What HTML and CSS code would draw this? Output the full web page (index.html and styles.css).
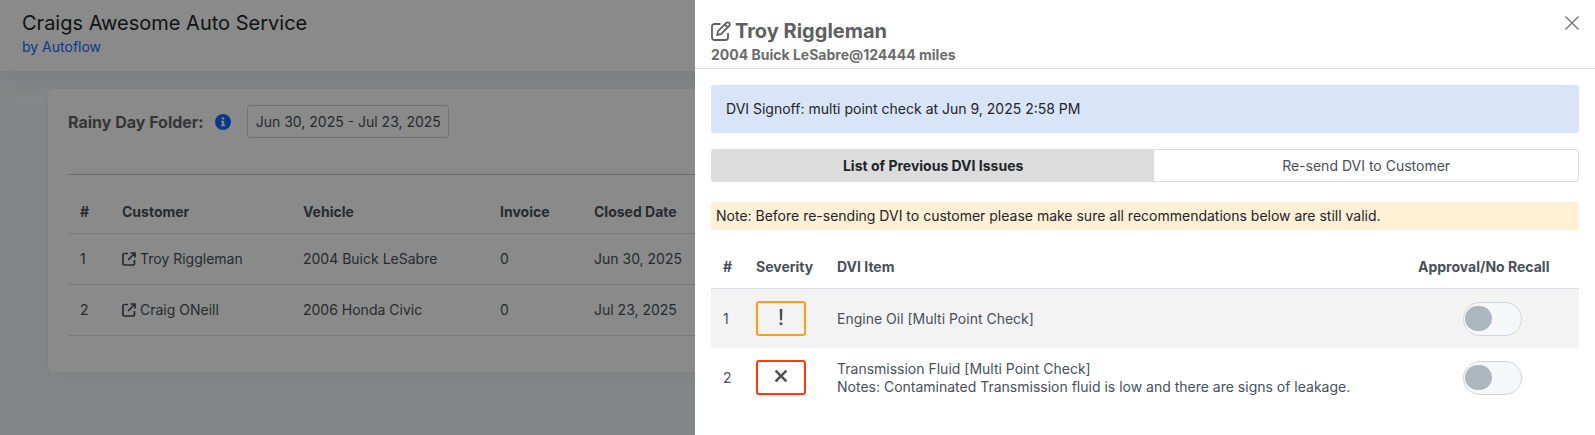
FILE: index.html
```html
<!DOCTYPE html>
<html lang="en">
<head>
    <meta charset="UTF-8">
    <meta name="viewport" content="width=device-width, initial-scale=1.0">
    <title>Rainy Day Folder</title>
    <link rel="stylesheet" href="styles.css">
</head>
<body>

    <header class="topbar">
        <h1>Craigs Awesome Auto Service</h1>
        <a href="#">by Autoflow</a>
    </header>

    <main class="card">
        <div class="filters">
            <label for="date-range">Rainy Day Folder:</label>
            <svg class="info" viewBox="0 0 16 16">
                <circle cx="8" cy="8" r="8" fill="#0d6efd"/>
                <path d="M7 3.5h2.2v2H7zM6 6.7h3.2v4h1v1.6H6v-1.6h1.1V8.2H6z" fill="#fff"/>
            </svg>
            <input type="text" id="date-range" value="Jun 30, 2025 - Jul 23, 2025" readonly>
        </div>

        <table class="customers">
            <colgroup>
                <col class="c-num"><col class="c-customer"><col class="c-vehicle"><col class="c-invoice"><col>
            </colgroup>
            <thead>
                <tr><th>#</th><th>Customer</th><th>Vehicle</th><th>Invoice</th><th>Closed Date</th></tr>
            </thead>
            <tbody>
                <tr>
                    <td>1</td>
                    <td>
                        <a href="#">
                            <svg viewBox="0 0 14 14"><path d="M6 1.5H2.2A1.2 1.2 0 0 0 1 2.7v9.100A1.200 1.200 0 0 0 2.200 13h9.100a1.200 1.200 0 0 0 1.200-1.200V8M8.500 1H13v4.500M13 1 6 8"/></svg>
                            Troy Riggleman
                        </a>
                    </td>
                    <td>2004 Buick LeSabre</td>
                    <td>0</td>
                    <td>Jun 30, 2025</td>
                </tr>
                <tr>
                    <td>2</td>
                    <td>
                        <a href="#">
                            <svg viewBox="0 0 14 14"><path d="M6 1.5H2.2A1.2 1.2 0 0 0 1 2.7v9.100A1.200 1.200 0 0 0 2.200 13h9.100a1.200 1.200 0 0 0 1.200-1.200V8M8.500 1H13v4.500M13 1 6 8"/></svg>
                            Craig ONeill
                        </a>
                    </td>
                    <td>2006 Honda Civic</td>
                    <td>0</td>
                    <td>Jul 23, 2025</td>
                </tr>
            </tbody>
        </table>
    </main>

    <div class="backdrop"></div>

    <!-- Customer drawer -->
    <aside class="drawer">
        <div class="drawer-header">
            <div>
                <h2>
                    <svg viewBox="0 0 20 20">
                        <path d="M9.500 3H3.500A2.500 2.500 0 0 0 1 5.500v11A2.500 2.500 0 0 0 3.500 19h11a2.500 2.500 0 0 0 2.500-2.500V12"/>
                        <path d="M6.300 13.800l.700-3.600L15.300 1.900a2 2 0 0 1 2.900 2.900L9.900 13.100zM13.700 3.500l2.900 2.900"/>
                    </svg>
                    Troy Riggleman
                </h2>
                <p>2004 Buick LeSabre@124444 miles</p>
            </div>
            <button class="close" aria-label="Close">
                <svg viewBox="0 0 14 14"><path d="M.5.5l13 13M13.500.5l-13 13"/></svg>
            </button>
        </div>

        <div class="drawer-body">
            <div class="signoff">DVI Signoff: multi point check at Jun 9, 2025 2:58 PM</div>

            <div class="tabs">
                <button class="tab active">List of Previous DVI Issues</button>
                <button class="tab">Re-send DVI to Customer</button>
            </div>

            <div class="note">Note: Before re-sending DVI to customer please make sure all recommendations below are still valid.</div>

            <table class="issues">
                <colgroup>
                    <col class="i-num"><col class="i-severity"><col><col class="i-approval">
                </colgroup>
                <thead>
                    <tr><th>#</th><th>Severity</th><th>DVI Item</th><th>Approval/No Recall</th></tr>
                </thead>
                <tbody>
                    <tr>
                        <td>1</td>
                        <td>
                            <div class="severity warning">
                                <svg viewBox="0 0 18 18"><path d="M7.700 1h2.700l-.3 11.300H8zM7.700 14.500h2.700V17H7.700z"/></svg>
                            </div>
                        </td>
                        <td>Engine Oil [Multi Point Check]</td>
                        <td class="center"><input type="checkbox" class="toggle" aria-label="Approve Engine Oil"></td>
                    </tr>
                    <tr>
                        <td>2</td>
                        <td>
                            <div class="severity danger">
                                <svg viewBox="0 0 18 18"><path d="M2.700 4.500 4.500 2.700 9 7.200l4.500-4.500 1.800 1.800L10.800 9l4.500 4.500-1.800 1.800L9 10.800l-4.500 4.500-1.800-1.800L7.200 9z"/></svg>
                            </div>
                        </td>
                        <td>Transmission Fluid [Multi Point Check]<br>Notes: Contaminated Transmission fluid is low and there are signs of leakage.</td>
                        <td class="center"><input type="checkbox" class="toggle" aria-label="Approve Transmission Fluid"></td>
                    </tr>
                </tbody>
            </table>
        </div>
    </aside>

</body>
</html>
```

FILE: styles.css
```css
* {
    box-sizing: border-box;
}

body {
    margin: 0;
    font-family: Inter, sans-serif;
    font-size: 14px;
    line-height: 18px;
    color: #495057;
    background-color: #f5f7fb;
}

h1, h2, p {
    margin: 0;
}

button, input {
    font: inherit;
    color: inherit;
}

/* Page */
.topbar {
    padding: 9px 22px 15px;
    background-color: #fff;
    box-shadow: 0 8px 24px rgba(18, 38, 63, 0.08);
}

.topbar h1 {
    font-size: 20px;
    font-weight: 400;
    line-height: 28px;
    color: #212529;
}

.topbar a {
    display: block;
    line-height: 19px;
    color: #0d6efd;
    text-decoration: none;
}

.card {
    margin: 18px 48px;
    padding: 16px 20px 36px;
    background-color: #fff;
    border-radius: 6px;
    box-shadow: 0 4px 12px rgba(18, 38, 63, 0.05);
}

.filters {
    display: flex;
    align-items: center;
    margin-bottom: 36px;
}

.filters label {
    font-size: 16px;
    font-weight: 700;
    color: #646464;
}

.info {
    width: 16px;
    height: 16px;
    margin: 0 16px 0 11px;
}

.filters input {
    width: 202px;
    height: 33px;
    padding: 0 8px;
    background-color: #fff;
    border: 1px solid #ced4da;
    border-radius: 3px;
}

table {
    width: 100%;
    border-collapse: collapse;
    table-layout: fixed;
}

th, td {
    padding: 12px;
    text-align: left;
    border-bottom: 1px solid #dcdfe6;
}

th {
    font-weight: 700;
}

.customers {
    border-top: 1px solid #c8c8c8;
}

.customers th {
    padding: 28px 12px 12px;
}

.customers td {
    padding: 16px 12px;
}

.customers a {
    display: flex;
    align-items: center;
    gap: 4px;
    color: inherit;
    text-decoration: none;
}

.customers svg {
    width: 14px;
    height: 14px;
    fill: none;
    stroke: currentColor;
    stroke-width: 1.7;
}

.c-num {
    width: 42px;
}

.c-customer {
    width: 181px;
}

.c-vehicle {
    width: 197px;
}

.c-invoice {
    width: 94px;
}

/* Drawer */
.backdrop {
    position: fixed;
    inset: 0;
    background-color: rgba(0, 0, 0, 0.46);
}

.drawer {
    position: fixed;
    top: 0;
    right: 0;
    bottom: 0;
    width: 900px;
    max-width: 100%;
    background-color: #fff;
}

.drawer-header {
    display: flex;
    justify-content: space-between;
    align-items: flex-start;
    padding: 16px 16px 4px;
    border-bottom: 1px solid #dcdfe6;
}

.drawer-header h2 {
    display: flex;
    align-items: center;
    gap: 4px;
    font-size: 20px;
    line-height: 30px;
    color: #5f5f5f;
}

.drawer-header h2 svg {
    width: 20px;
    height: 20px;
    fill: none;
    stroke: currentColor;
    stroke-width: 1.8;
}

.drawer-header p {
    font-weight: 700;
    color: #6c6c6c;
}

.close {
    padding: 0;
    border: none;
    background: none;
    line-height: 0;
    cursor: pointer;
}

.close svg {
    width: 14px;
    height: 14px;
    stroke: #707070;
    stroke-width: 1.3;
}

.drawer-body {
    padding: 16px;
}

.signoff {
    padding: 15px;
    margin-bottom: 16px;
    color: #212529;
    background-color: #d8e4f8;
    border-radius: 3px;
}

.tabs {
    display: flex;
    margin-bottom: 20px;
    border: 1px solid #dcdcdc;
    border-radius: 3px;
}

.tab {
    flex: 1 1 auto;
    padding: 6px 12px;
    border: none;
    background: none;
    line-height: 19px;
    cursor: pointer;
}

.tab.active {
    padding: 6px 15px;
    font-weight: 700;
    color: #212529;
    background-color: #dcdcdc;
}

.note {
    padding: 5px;
    margin-bottom: 16px;
    color: #212529;
    background-color: #fff0d6;
    border-radius: 3px;
}

.issues tbody td {
    height: 59px;
    padding: 12px 12px 11px;
    border-bottom: none;
}

.issues tbody tr:nth-child(odd) {
    background-color: #f3f3f3;
}

.issues .center {
    text-align: center;
}

.i-num {
    width: 33px;
}

.i-severity {
    width: 81px;
}

.i-approval {
    width: 173px;
}

.severity {
    width: 50px;
    height: 35px;
    padding-top: 5px;
    text-align: center;
    border: 2px solid;
    border-radius: 3px;
}

.severity.warning {
    border-color: #ff9f0a;
}

.severity.danger {
    border-color: #ff3b0a;
}

.severity svg {
    width: 18px;
    height: 18px;
    fill: #495057;
}

.toggle {
    appearance: none;
    display: inline-flex;
    align-items: center;
    width: 59px;
    height: 34px;
    margin: 0;
    padding: 1px;
    vertical-align: middle;
    background-color: #f5f7fb;
    border: 1px solid #d3d6d9;
    border-radius: 17px;
    cursor: pointer;
}

.toggle::before {
    content: "";
    width: 27px;
    height: 25px;
    background-color: #adb5bd;
    border-radius: 13px;
}

.toggle:checked {
    justify-content: flex-end;
}
```
